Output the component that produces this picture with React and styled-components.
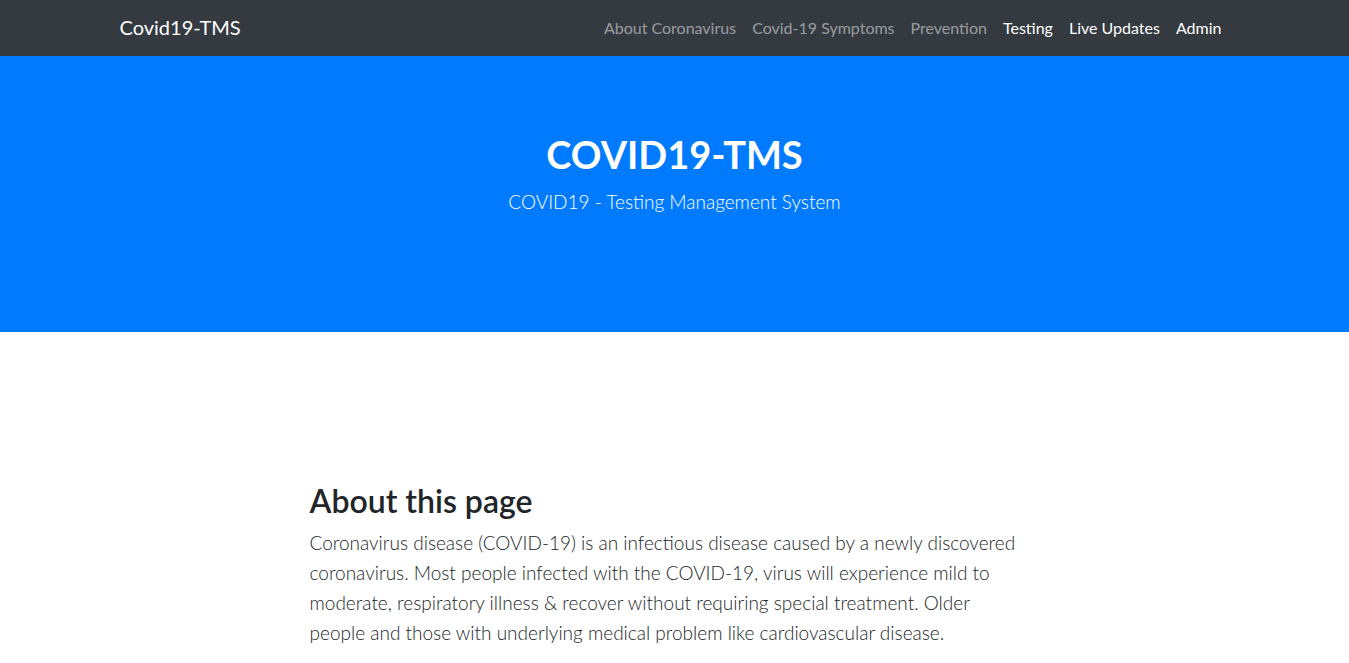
import React from "react";
import styled, { createGlobalStyle } from "styled-components";

const GlobalStyle = createGlobalStyle`
    * { box-sizing : border-box; }
    body {
        margin : 0;
        font-family : "Lato", "Open Sans", sans-serif;
        color : #212529;
        background : #fff;
    }
`
const Navbar = styled.nav`
    height : 56px;
    background-color : #343a40;
`
const Container = styled.div`
    width : 1140px;
    margin : 0 auto;
    padding : 0 15px 2px;
    height : 100%;
    display : flex;
    align-items : center;
    justify-content : space-between;
`
const Brand = styled.a`
    color : #fff;
    font-size : 20px;
    text-decoration : none;
`
const NavList = styled.ul`
    display : flex;
    list-style : none;
    margin : 0;
    padding : 0;
`
const NavLink = styled.a`
    display : block;
    padding : 8px;
    font-size : 16px;
    text-decoration : none;
    color : ${props => props.active ? "#fff" : "rgba(255,255,255,.5)"};
`
const Jumbotron = styled.header`
    height : 276px;
    background-color : #007bff;
    color : #fff;
    text-align : center;
    padding-top : 76px;
`
const HeroTitle = styled.h1`
    margin : 0;
    font-size : 38px;
    font-weight : 700;
    line-height : 1.2;
`
const HeroLead = styled.p`
    margin : 12px 0 0;
    font-size : 19px;
    font-weight : 300;
`
const Section = styled.section`
    width : 1140px;
    margin : 0 auto;
    padding : 150px 15px 0 205px;
`
const Column = styled.div`
    width : 716px;
`
const Heading = styled.h2`
    margin : 0 0 8px;
    font-size : 32px;
    font-weight : 600;
    line-height : 1.2;
`
const Lead = styled.p`
    margin : 0;
    font-size : 19px;
    font-weight : 300;
    line-height : 30px;
    color : #212529;
`

const links = [
    { label : "About Coronavirus" },
    { label : "Covid-19 Symptoms" },
    { label : "Prevention" },
    { label : "Testing", active : true },
    { label : "Live Updates", active : true },
    { label : "Admin", active : true },
];

const App = () => {
    return(
        <>
            <GlobalStyle />
            <Navbar>
                <Container>
                    <Brand href="#">Covid19-TMS</Brand>
                    <NavList>
                        {links.map(link => (
                            <li key={link.label}>
                                <NavLink href="#" active={link.active ? 1 : 0}>{link.label}</NavLink>
                            </li>
                        ))}
                    </NavList>
                </Container>
            </Navbar>
            <Jumbotron>
                <HeroTitle>COVID19-TMS</HeroTitle>
                <HeroLead>COVID19 - Testing Management System</HeroLead>
            </Jumbotron>
            <Section>
                <Column>
                    <Heading>About this page</Heading>
                    <Lead>
                        Coronavirus disease (COVID-19) is an infectious disease caused by a newly discovered
                        coronavirus. Most people infected with the COVID-19, virus will experience mild to
                        moderate, respiratory illness &amp; recover without requiring special treatment. Older
                        people and those with underlying medical problem like cardiovascular disease.
                    </Lead>
                </Column>
            </Section>
        </>
    );
}

export default App;
